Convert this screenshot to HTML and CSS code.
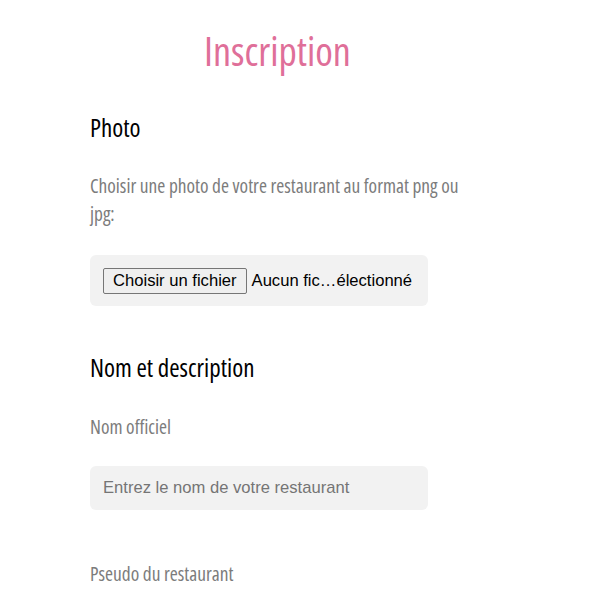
FILE: index.html
```html
<!DOCTYPE html>
<html lang="fr">
<head>
<meta charset="utf-8">
<title>Inscription</title>
<link rel="stylesheet" href="styles.css">
</head>
<body>
<main class="page">
  <h1 class="title">Inscription</h1>
  <section class="section">
    <h2 class="section-title">Photo</h2>
    <p class="label label-photo">Choisir une photo de votre restaurant au format png ou jpg:</p>
    <div class="file-box">
      <label class="file-btn"><input class="file-native" type="file" accept=".png,.jpg">Choisir un fichier</label>
      <span class="file-name">Aucun fic…électionné</span>
    </div>
  </section>
  <section class="section">
    <h2 class="section-title section-title-nom">Nom et description</h2>
    <label class="label label-nom" for="nom">Nom officiel</label>
    <input class="text-input" id="nom" type="text" placeholder="Entrez le nom de votre restaurant">
    <label class="label label-pseudo" for="pseudo">Pseudo du restaurant</label>
  </section>
</main>
</body>
</html>
```
FILE: styles.css
```css
html, body {
  margin: 0;
  padding: 0;
  background: #ffffff;
}

.page {
  width: 375px;
  margin-left: 90px;
  padding-top: 26px;
  font-family: "Open Sans", "Noto Sans", sans-serif;
  font-stretch: 75%;
}

.title {
  margin: 0;
  text-align: center;
  font-size: 40px;
  line-height: 50px;
  font-weight: 500;
  color: #df6f99;
}

.section {
  display: flex;
  flex-direction: column;
  align-items: flex-start;
}

.section-title {
  margin: 34px 0 0;
  font-size: 25px;
  line-height: 34px;
  font-weight: 500;
  color: #000000;
}

.section-title-nom {
  margin-top: 44px;
}

.label {
  display: block;
  margin: 28px 0 0;
  font-size: 19.4px;
  line-height: 28px;
  font-weight: 500;
  color: #7c7c7c;
}

.label-nom {
  margin-top: 29px;
}

.label-pseudo {
  margin-top: 50px;
}

.file-box {
  box-sizing: border-box;
  width: 338px;
  height: 51px;
  margin-top: 27px;
  padding: 0 13px;
  display: flex;
  align-items: center;
  gap: 5px;
  background: #f2f2f2;
  border-radius: 6px;
  font-family: "Liberation Sans", Arial, sans-serif;
  font-stretch: normal;
  font-size: 16.6px;
}

.file-native {
  display: none;
}

.file-btn {
  box-sizing: border-box;
  height: 26px;
  padding: 0 9px;
  line-height: 24px;
  background: #efefef;
  border: 1px solid #767676;
  border-radius: 2px;
  color: #000000;
  white-space: nowrap;
}

.file-name {
  color: #000000;
  white-space: nowrap;
}

.text-input {
  box-sizing: border-box;
  width: 338px;
  height: 44px;
  margin-top: 25px;
  padding: 0 13px;
  border: none;
  border-radius: 6px;
  background: #f2f2f2;
  font-family: "Liberation Sans", Arial, sans-serif;
  font-stretch: normal;
  font-size: 16.6px;
  color: #000000;
  outline: none;
}

.text-input::placeholder {
  color: #757575;
}
```
